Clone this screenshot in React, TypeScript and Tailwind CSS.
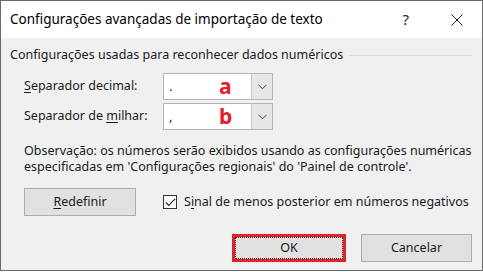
import React from "react";

const font = { fontFamily: '"Noto Sans", "Segoe UI", sans-serif' };

const Chevron = () => (
  <svg width="9" height="6" viewBox="0 0 9 6" fill="none">
    <path d="M0.5 0.8 L4.5 4.8 L8.5 0.8" stroke="#444" strokeWidth="1" />
  </svg>
);

const Combo = ({ value, mark }: { value: string; mark: string }) => (
  <div className="flex w-[110px] h-[27px] border border-[#b4b4b4] bg-white">
    <div className="relative flex-1 flex items-center pl-[5px] text-[13px] text-[#222]">
      {value}
      <span className="absolute left-[55px] top-[-3px] text-[21px] font-bold text-[#e3202c]">
        {mark}
      </span>
    </div>
    <div className="w-[21px] flex items-center justify-center bg-[#e6e6e6] border-l border-[#c8c8c8]">
      <Chevron />
    </div>
  </div>
);

export default function App() {
  return (
    <div
      className="w-[483px] h-[271px] border border-[#6c6c6c] bg-[#f0f0f0] flex flex-col text-[#1a1a1a] whitespace-nowrap"
      style={font}
    >
      {/* title bar */}
      <div className="h-[37px] bg-white flex items-center pl-[9px] shrink-0">
        <span className="text-[13.5px] text-black">
          Configurações avançadas de importação de texto
        </span>
        <span className="ml-auto mr-[42px] text-[15px] text-[#222]">?</span>
        <svg width="12" height="12" viewBox="0 0 12 12" className="mr-[19px]">
          <path d="M0.5 0.5 L11.5 11.5 M11.5 0.5 L0.5 11.5" stroke="#222" strokeWidth="1" />
        </svg>
      </div>

      {/* body */}
      <div className="flex flex-col pl-[9px] pr-[10px] text-[12.5px]">
        <div className="flex items-center mt-[9px] h-[17px]">
          <span>Configurações usadas para reconhecer dados numéricos</span>
          <div className="flex-1 h-px bg-[#dcdcdc] ml-[6px]" />
        </div>

        <div className="flex flex-col gap-[3px] mt-[9px] pl-[14px]">
          <div className="flex items-center">
            <span className="w-[139px]">
              <span className="underline underline-offset-2">S</span>eparador decimal:
            </span>
            <Combo value="." mark="a" />
          </div>
          <div className="flex items-center">
            <span className="w-[139px]">
              Separador de <span className="underline underline-offset-2">m</span>ilhar:
            </span>
            <Combo value="," mark="b" />
          </div>
        </div>

        <p className="mt-[13px] pl-[14px] leading-[16px]">
          Observação: os números serão exibidos usando as configurações numéricas
          <br />
          especificadas em 'Configurações regionais' do 'Painel de controle'.
        </p>

        <div className="flex items-center mt-[13px] pl-[14px]">
          <button className="w-[112px] h-[28px] bg-[#e1e1e1] border border-[#adadad]">
            <span className="underline underline-offset-2">R</span>edefinir
          </button>
          <div className="ml-[27px] flex items-center">
            <div className="w-[14px] h-[14px] bg-white border border-[#333] flex items-center justify-center">
              <svg width="11" height="9" viewBox="0 0 11 9" fill="none">
                <path d="M0.8 4.5 L3.8 7.5 L10.2 0.8" stroke="#222" strokeWidth="1.1" />
              </svg>
            </div>
            <span className="ml-[7px]">
              S<span className="underline underline-offset-2">i</span>nal de menos posterior em números negativos
            </span>
          </div>
        </div>

        <div className="flex justify-end items-center mt-[18px] gap-[15px]">
          <div className="border-[3px] border-[#e3202c]">
            <button className="w-[108px] h-[22px] bg-[#e1e1e1] border border-dotted border-[#222] text-center">
              OK
            </button>
          </div>
          <button className="w-[111px] h-[28px] bg-[#e1e1e1] border border-[#adadad]">
            Cancelar
          </button>
        </div>
      </div>
    </div>
  );
}
